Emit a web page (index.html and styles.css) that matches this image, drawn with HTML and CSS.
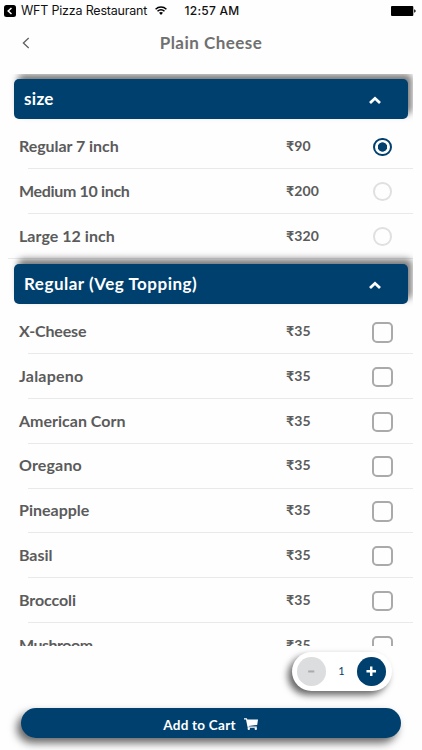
FILE: index.html
```html
<!DOCTYPE html>
<html lang="en">
<head>
<meta charset="utf-8">
<title>Plain Cheese</title>
<link rel="stylesheet" href="styles.css">
</head>
<body>
<div class="status">
  <svg class="back-app" viewBox="0 0 12 12"><rect width="12" height="12" rx="2.5" fill="#000"/><path d="M7.5 3 4.2 6l3.3 3" fill="none" stroke="#fff" stroke-width="1.5"/></svg>
  <span class="carrier">WFT Pizza Restaurant</span>
  <svg class="wifi" viewBox="0 0 12 9"><path d="M.6 3.2a8 8 0 0 1 10.8 0M2.5 5.2a5.2 5.2 0 0 1 7 0" fill="none" stroke="#000" stroke-width="1.5"/><path d="M4 6.8a3 3 0 0 1 4 0L6 8.9z"/></svg>
  <span class="clock">12:57 AM</span>
  <svg class="battery" viewBox="0 0 25 10"><rect width="22.3" height="10" rx="1"/><path d="M23.2 3.3q1.5.4 1.5 1.7t-1.5 1.7z"/></svg>
</div>
<header class="nav">
  <svg class="back" viewBox="0 0 8 12"><path d="M6.7 1 1.4 6l5.3 5" fill="none" stroke="#606060" stroke-width="1.3"/></svg>
  <h1>Plain Cheese</h1>
</header>
<main class="options">
  <section>
    <h2 class="bar"><span class="size-title">size</span><svg class="chev" viewBox="0 0 14 9"><path d="m2 7 5-4.7L12 7" /></svg></h2>
    <ul>
      <li><span class="name w-regular">Regular 7 inch</span><span class="price">₹90</span><i class="radio on"></i></li>
      <li><span class="name w-medium">Medium 10 inch</span><span class="price">₹200</span><i class="radio"></i></li>
      <li class="last"><span class="name w-large">Large 12 inch</span><span class="price">₹320</span><i class="radio"></i></li>
    </ul>
  </section>
  <section>
    <h2 class="bar"><span class="topping-title">Regular (Veg Topping)</span><svg class="chev" viewBox="0 0 14 9"><path d="m2 7 5-4.7L12 7" /></svg></h2>
    <ul>
      <li><span class="name w-cheese">X-Cheese</span><span class="price">₹35</span><i class="check"></i></li>
      <li><span class="name w-jalapeno">Jalapeno</span><span class="price">₹35</span><i class="check"></i></li>
      <li><span class="name w-corn">American Corn</span><span class="price">₹35</span><i class="check"></i></li>
      <li><span class="name w-oregano">Oregano</span><span class="price">₹35</span><i class="check"></i></li>
      <li><span class="name w-pineapple">Pineapple</span><span class="price">₹35</span><i class="check"></i></li>
      <li><span class="name w-basil">Basil</span><span class="price">₹35</span><i class="check"></i></li>
      <li><span class="name w-broccoli">Broccoli</span><span class="price">₹35</span><i class="check"></i></li>
      <li><span class="name w-mushroom">Mushroom</span><span class="price">₹35</span><i class="check"></i></li>
    </ul>
  </section>
</main>
<footer>
  <div class="stepper">
    <span class="round minus"><svg viewBox="0 0 28 28"><path d="M11 14.2h6" stroke="#a9abad" stroke-width="2"/></svg></span>
    <span class="count">1</span>
    <span class="round plus"><svg viewBox="0 0 28 28"><path d="M9.3 14h9.4M14 9.3v9.4" stroke="#fff" stroke-width="2.4"/></svg></span>
  </div>
  <div class="cart"><span>Add to Cart</span><svg viewBox="0 0 14 12"><path d="M0 .3h2.9l.4 1.3H14l-.8 5.3-8.6 1 .2.7h8v1.1H3.7L2 1.4H0z"/><circle cx="4.8" cy="10.8" r="1.2"/><circle cx="11.8" cy="10.8" r="1.2"/></svg></div>
</footer>
</body>
</html>
```
FILE: styles.css
```css
* { box-sizing: border-box; }
body {
  margin: 0;
  width: 422px;
  height: 750px;
  overflow: hidden;
  background: #fefefe;
  color: #5b5b5b;
  font-family: Lato, "Open Sans", sans-serif;
  display: flex;
  flex-direction: column;
}
svg { display: block; flex: none; }
.status {
  height: 22px;
  padding: 0 6px 0 4px;
  display: flex;
  align-items: center;
  color: #111;
  font: 12.5px/20px Inter, sans-serif;
}
.back-app { width: 12px; height: 12px; margin: -1px 5px 0 0; }
.carrier { width: 126px; letter-spacing: -0.2px; white-space: nowrap; margin-top: -1px; }
.wifi { width: 12px; height: 9px; margin: -1px 0 0 8px; }
.clock { margin-left: 17.5px; font-size: 12px; font-weight: 500; letter-spacing: .25px; white-space: nowrap; }
.battery { width: 25px; height: 10px; margin-left: auto; }
.nav { position: relative; height: 52px; display: flex; justify-content: center; }
.back { position: absolute; left: 22px; top: 14.5px; width: 8px; height: 12px; }
h1 { margin: 0; font-size: 17px; font-weight: 700; line-height: 42px; letter-spacing: .48px; color: #707070; }
.options { width: 413px; height: 572px; padding-top: 5px; overflow: hidden; }
.bar {
  margin: 0 5px 5px 13.5px;
  height: 40.4px;
  padding: 0 26px 0 10.5px;
  display: flex;
  align-items: center;
  justify-content: space-between;
  border-radius: 5px;
  background: #00406f;
  box-shadow: 4px -5px 7px rgba(0, 0, 0, .52);
  color: #fff;
  font-size: 17px;
  line-height: 22px;
  font-weight: 700;
}
.size-title { letter-spacing: .3px; }
.topping-title { letter-spacing: .5px; }
.chev { width: 14px; height: 9px; margin-top: 3px; fill: none; stroke: #fff; stroke-width: 2.8; }
ul { list-style: none; margin: 0 0 5.2px; padding: 0; }
li {
  height: 44.8px;
  padding: 0 19.5px 0 19px;
  display: grid;
  grid-template-columns: 267px 1fr 22px;
  align-items: center;
  justify-items: start;
  background: linear-gradient(#e9e9e9, #e9e9e9) 28px 100% / 385px 1px no-repeat;
}
.last { background-position: 8px 100%; background-size: 405px 1px; }
.name { font-size: 16px; line-height: 22px; font-weight: 700; margin-bottom: 1.4px; white-space: nowrap; }
.w-regular { letter-spacing: -.05px; }
.w-medium { letter-spacing: -.33px; }
.w-large { letter-spacing: .04px; }
.w-cheese { letter-spacing: -.15px; }
.w-jalapeno { letter-spacing: .22px; }
.w-corn { letter-spacing: 0; }
.w-oregano { letter-spacing: .15px; }
.w-pineapple { letter-spacing: 0; }
.w-basil { letter-spacing: -.05px; }
.w-broccoli { letter-spacing: -.1px; }
.w-mushroom { letter-spacing: -.5px; }
.price { font-size: 14px; line-height: 20px; font-weight: 700; letter-spacing: .1px; margin-bottom: 1.4px; }
.radio { justify-self: center; width: 18.5px; height: 18.5px; border: 2px solid #dfe0e2; border-radius: 50%; }
.on { border-color: #00406f; background: radial-gradient(circle, #00406f 4.3px, transparent 5px); }
.check { justify-self: center; width: 20.5px; height: 20.5px; margin-top: 1px; border: 2px solid #aaa; border-radius: 5px; }
footer { flex: 1; padding: 6px 21px 0 20.5px; }
.stepper {
  width: 100px;
  height: 38.5px;
  margin-left: 271px;
  padding: 0 5.5px;
  display: flex;
  align-items: center;
  justify-content: space-between;
  border-radius: 20px;
  background: #fff;
  box-shadow: -4px 4px 7px rgba(0, 0, 0, .6);
}
.round { width: 28.5px; height: 28.5px; border-radius: 50%; }
.minus { background: #dcddde; }
.plus { background: #00406f; }
.count { color: #00406f; font-size: 11px; line-height: 16px; }
.cart {
  height: 30.5px;
  margin-top: 17.2px;
  display: flex;
  align-items: center;
  justify-content: center;
  gap: 8.5px;
  border-radius: 15.3px;
  background: #00406f;
  box-shadow: -4px 5px 8px rgba(0, 0, 0, .6);
  color: #fff;
  font-size: 13.5px;
  font-weight: 700;
  line-height: 20px;
  letter-spacing: .25px;
}
.cart span { padding-top: 4px; }
.cart svg { width: 14px; height: 12px; fill: #fff; margin-top: 3px; }
```
